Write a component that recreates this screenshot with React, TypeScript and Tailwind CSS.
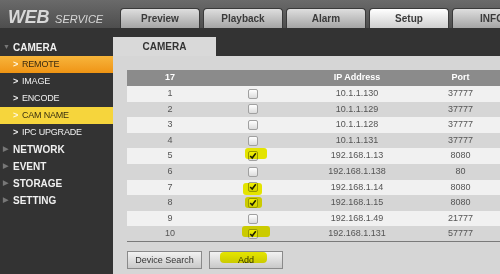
import React from "react";

const rows = [
  { n: 1, ip: "10.1.1.130", port: "37777", c: false },
  { n: 2, ip: "10.1.1.129", port: "37777", c: false },
  { n: 3, ip: "10.1.1.128", port: "37777", c: false },
  { n: 4, ip: "10.1.1.131", port: "37777", c: false },
  { n: 5, ip: "192.168.1.13", port: "8080", c: true },
  { n: 6, ip: "192.168.1.138", port: "80", c: false },
  { n: 7, ip: "192.168.1.14", port: "8080", c: true },
  { n: 8, ip: "192.168.1.15", port: "8080", c: true },
  { n: 9, ip: "192.168.1.49", port: "21777", c: false },
  { n: 10, ip: "192.168.1.131", port: "57777", c: true },
];

function Box({ checked }: { checked: boolean }) {
  return (
    <div className="relative mx-auto w-[10px] h-[10px] rounded-[2px] border border-[#a0a0a0] bg-gradient-to-b from-[#ffffff] to-[#dcdcdc]">
      {checked && (
        <svg viewBox="0 0 10 10" className="absolute left-[0px] top-[0px] w-[8px] h-[8px]">
          <path d="M1.5 5 L4 7.5 L8.5 1.5" stroke="#222" strokeWidth="2" fill="none" />
        </svg>
      )}
    </div>
  );
}

function Tab({ label, active }: { label: string; active?: boolean }) {
  return (
    <div
      className={
        "w-[80px] h-[20px] shrink-0 rounded-t-[4px] border border-b-0 border-[#3a3a3a] flex items-center justify-center text-[10px] font-bold text-[#3a3a3a] " +
        (active
          ? "bg-gradient-to-b from-[#ffffff] to-[#cfcfcf]"
          : "bg-gradient-to-b from-[#dedede] to-[#a5a5a5]")
      }
    >
      {label}
    </div>
  );
}

function Cat({ label, open }: { label: string; open?: boolean }) {
  return (
    <div className="h-[17px] flex items-center text-[10px] font-bold text-[#f0f0f0]">
      <span className="w-[13px] pl-[3px] text-[7px] text-[#777]">{open ? "▼" : "▶"}</span>
      <span>{label}</span>
    </div>
  );
}

function Sub({ label, hl }: { label: string; hl?: "orange" | "yellow" }) {
  const bg =
    hl === "orange"
      ? "bg-gradient-to-b from-[#f7b53a] to-[#ef9412] text-[#3a2a10]"
      : hl === "yellow"
      ? "bg-[#f6d53c] text-[#3a3010]"
      : "text-[#f0f0f0]";
  return (
    <div className={"h-[17px] flex items-center text-[9px] tracking-[-0.2px] " + bg}>
      <span className={"w-[22px] pl-[13px] font-bold " + (hl ? "text-[#fff8e0]" : "")}>&gt;</span>
      <span>{label}</span>
    </div>
  );
}

export default function App() {
  return (
    <div
      className="relative w-[500px] h-[274px] overflow-hidden flex flex-col bg-[#333333]"
      style={{ fontFamily: '"Liberation Sans", Arial, sans-serif' }}
    >
      {/* header */}
      <div className="h-[28px] shrink-0 flex bg-gradient-to-b from-[#6a6a6a] to-[#4e4e4e]">
        <div className="w-[120px] shrink-0 flex items-baseline pl-[8px] pt-[4px] italic text-[#d8d8d8]">
          <span className="text-[18px] font-bold tracking-[-0.3px]">WEB</span>
          <span className="text-[11px] ml-[6px]">SERVICE</span>
        </div>
        <div className="flex gap-[3px] pt-[8px]">
          <Tab label="Preview" />
          <Tab label="Playback" />
          <Tab label="Alarm" />
          <Tab label="Setup" active />
          <Tab label="INFO" />
        </div>
      </div>

      <div className="flex flex-1">
        {/* sidebar */}
        <div className="w-[113px] shrink-0 bg-[#333333] pt-[11px]">
          <Cat label="CAMERA" open />
          <Sub label="REMOTE" hl="orange" />
          <Sub label="IMAGE" />
          <Sub label="ENCODE" />
          <Sub label="CAM NAME" hl="yellow" />
          <Sub label="IPC UPGRADE" />
          <Cat label="NETWORK" />
          <Cat label="EVENT" />
          <Cat label="STORAGE" />
          <Cat label="SETTING" />
        </div>

        {/* main */}
        <div className="flex-1 flex flex-col">
          <div className="h-[9px] shrink-0 bg-[#333333]" />
          <div className="h-[19px] shrink-0 flex bg-[#333333]">
            <div className="w-[103px] bg-[#d9d9d9] flex items-center justify-center text-[10px] font-bold text-[#333]">
              CAMERA
            </div>
          </div>
          <div className="flex-1 bg-[#d6d6d6] pl-[14px] pt-[14px]">
            <table className="border-collapse table-fixed w-[373px] text-[9px] text-[#555]">
              <colgroup>
                <col className="w-[86px]" />
                <col className="w-[80px]" />
                <col className="w-[128px]" />
                <col className="w-[79px]" />
              </colgroup>
              <thead>
                <tr className="h-[16px] bg-[#8b8b8b] text-white font-bold">
                  <th className="font-bold">17</th>
                  <th></th>
                  <th className="font-bold">IP Address</th>
                  <th className="font-bold">Port</th>
                </tr>
              </thead>
              <tbody className="border-b border-[#7a7a7a]">
                {rows.map((r, i) => (
                  <tr
                    key={r.n}
                    className={"h-[15.6px] text-center " + (i % 2 === 0 ? "bg-[#f1f1f1]" : "bg-[#d6d6d6]")}
                  >
                    <td className="p-0">{r.n}</td>
                    <td className="p-0">
                      <Box checked={r.c} />
                    </td>
                    <td className="p-0">{r.ip}</td>
                    <td className="p-0">{r.port}</td>
                  </tr>
                ))}
              </tbody>
            </table>
            <div className="flex gap-[7px] mt-[9px]">
              <div className="w-[75px] h-[18px] border border-[#8a8a8a] bg-gradient-to-b from-[#f2f2f2] to-[#c9c9c9] flex items-center justify-center text-[9px] text-[#333]">
                Device Search
              </div>
              <div className="w-[74px] h-[18px] border border-[#8a8a8a] bg-gradient-to-b from-[#f2f2f2] to-[#c9c9c9] flex items-center justify-center text-[9px] text-[#333]">
                Add
              </div>
            </div>
          </div>
        </div>
      </div>

      {/* yellow marker highlights */}
      <div className="absolute left-[245px] top-[148px] w-[22px] h-[11px] rounded-[3px] bg-[#f2f200] mix-blend-multiply" />
      <div className="absolute left-[243px] top-[183px] w-[19px] h-[12px] rounded-[3px] bg-[#f2f200] mix-blend-multiply" />
      <div className="absolute left-[245px] top-[197px] w-[17px] h-[11px] rounded-[3px] bg-[#f2f200] mix-blend-multiply" />
      <div className="absolute left-[242px] top-[226px] w-[28px] h-[11px] rounded-[3px] bg-[#f2f200] mix-blend-multiply" />
      <div className="absolute left-[220px] top-[252px] w-[47px] h-[11px] rounded-[4px] bg-[#f2f200] mix-blend-multiply" />
    </div>
  );
}
